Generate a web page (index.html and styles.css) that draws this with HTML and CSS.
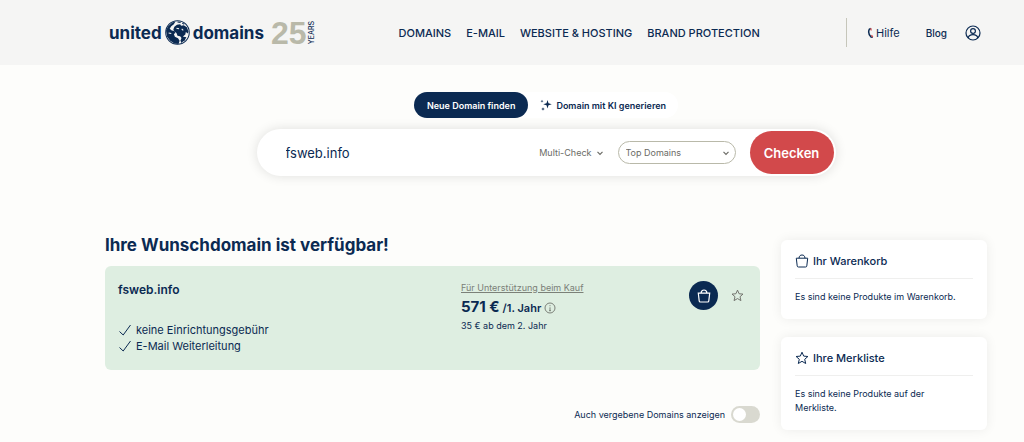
FILE: index.html
```html
<!DOCTYPE html>
<html lang="de">
<head>
<meta charset="utf-8">
<meta name="viewport" content="width=device-width, initial-scale=1">
<title>united domains</title>
<link rel="stylesheet" href="styles.css">
</head>
<body>
<svg class="sprite" aria-hidden="true">
  <symbol id="bag" viewBox="0 0 14 14"><path d="M1.300 4.200h11.400l-.9 7.700a1.200 1.200 0 0 1-1.200 1.100H3.400a1.200 1.200 0 0 1-1.200-1.100zM4 4.200C4.200 1.900 5.300 1 7 1s2.800.9 3 3.200"/></symbol>
  <symbol id="star" viewBox="0 0 14 14"><path d="M7 1.200l1.700 3.900 4.200.4-3.200 2.800 1 4.200L7 10.300l-3.700 2.200 1-4.200L1.100 5.500l4.200-.4z"/></symbol>
  <symbol id="chevron" viewBox="0 0 8 8"><path d="M1.500 2.800L4 5.300l2.500-2.500"/></symbol>
  <symbol id="check" viewBox="0 0 14 12"><path d="M1.500 7.500l3.700 3.500L12.500 1"/></symbol>
</svg>
<header class="header">
  <a class="logo" href="#" aria-label="united domains 25 years">
    <span>united</span>
    <svg class="globe" viewBox="0 0 24 24" aria-hidden="true">
      <circle class="globe-sea" cx="12" cy="12" r="11.300"/>
      <path class="globe-land" d="M1 10L3 6l4-3.500 3-1L8.500 4 6 6 4.500 8.500 6.500 10l2.500.5 1 2-1.500 1 1 2.500 3 1.500 1.500 2.500-1 3-4-.5-4-2.500-3-4z"/>
      <path class="globe-land" d="M9 6.500l2.500-2 3-.5 1 1.500 2.500-.5 3 2 1.500 4-.5 2-2-1.500-.5 2.500-2 1.500.5 2-1.500.5-2-2.500-2.500-.5-1-2.500-2-1.500-1-2z"/>
      <path class="globe-land" d="M16 17l2-1 2.500.5-1.500 3-3.500 2.500-.5-2.500z"/>
      <path class="globe-line" d="M12 2l3 .5M16.500 3l2 1"/>
      <path class="globe-gap" d="M11 8l2.500.5M16 8.500l1.500 1.500M3.500 12.500L6 13"/>
    </svg>
    <span>domains</span>
    <span class="jubilee">25</span>
    <span class="years">YEARS</span>
  </a>
  <nav class="nav">
    <a href="#">DOMAINS</a>
    <a href="#">E-MAIL</a>
    <a href="#">WEBSITE &amp; HOSTING</a>
    <a href="#">BRAND PROTECTION</a>
  </nav>
  <div class="service">
    <a class="help" href="#"><svg viewBox="0 0 6 12" aria-hidden="true"><path class="phone" d="M3.300 1.500L1.800 2.200C.8 4.500 1.500 8 3.500 10l1.800.2"/><path class="phone-end" d="M3.300 1.200l.4 2.300M4 8.200l1.300 2"/></svg>Hilfe</a>
    <a class="blog" href="#">Blog</a>
    <a class="account" href="#" aria-label="Konto"><svg viewBox="0 0 16 16" aria-hidden="true"><circle cx="8" cy="8" r="7"/><circle cx="8" cy="6" r="2.400"/><path d="M3.200 13c.5-2.300 2.300-3.300 4.800-3.300s4.300 1 4.800 3.300"/></svg></a>
  </div>
</header>
<main class="page">
  <section class="finder">
    <div class="tabs">
      <button class="tab tab-active" type="button">Neue Domain finden</button>
      <button class="tab" type="button"><svg viewBox="0 0 12 12" aria-hidden="true"><path d="M7.500 1l1 3.300L11.800 5.300l-3.300 1-1 3.300-1-3.300-3.300-1 3.300-1zM2 .7l.4 1.100 1.100.4-1.100.4L2 3.700l-.4-1.100L.5 2.200l1.100-.4zM3 8.200l.5 1.300 1.300.5-1.300.5L3 11.800l-.5-1.300-1.300-.5 1.300-.5z"/></svg>Domain mit KI generieren</button>
    </div>
    <form class="search">
      <input class="query" type="text" value="fsweb.info" aria-label="Domain">
      <button class="multi" type="button">Multi-Check <svg viewBox="0 0 8 8" aria-hidden="true"><use href="#chevron"/></svg></button>
      <div class="picker">
        <select aria-label="Kategorie"><option>Top Domains</option></select>
        <svg viewBox="0 0 8 8" aria-hidden="true"><use href="#chevron"/></svg>
      </div>
      <button class="submit" type="button">Checken</button>
    </form>
  </section>
  <div class="columns">
    <section class="results">
      <h1>Ihre Wunschdomain ist verfügbar!</h1>
      <article class="result">
        <div class="info">
          <h2>fsweb.info</h2>
          <ul>
            <li><svg viewBox="0 0 14 12" aria-hidden="true"><use href="#check"/></svg>keine Einrichtungsgebühr</li>
            <li><svg viewBox="0 0 14 12" aria-hidden="true"><use href="#check"/></svg>E-Mail Weiterleitung</li>
          </ul>
        </div>
        <div class="price">
          <a href="#">Für Unterstützung beim Kauf</a>
          <p class="amount"><strong>571 €</strong><b>/1. Jahr</b><svg viewBox="0 0 12 12" aria-hidden="true"><circle cx="6" cy="6" r="5"/><path d="M6 5.300v3.400M6 3.200v1M5 8.700h2"/></svg></p>
          <p class="later">35 € ab dem 2. Jahr</p>
        </div>
        <div class="actions">
          <button class="add" type="button" aria-label="In den Warenkorb"><svg viewBox="0 0 14 14" aria-hidden="true"><use href="#bag"/></svg></button>
          <button class="save" type="button" aria-label="Merken"><svg viewBox="0 0 14 14" aria-hidden="true"><use href="#star"/></svg></button>
        </div>
      </article>
      <label class="toggle">Auch vergebene Domains anzeigen <input type="checkbox"></label>
    </section>
    <aside class="sidebar">
      <section class="box">
        <h3><svg viewBox="0 0 14 14" aria-hidden="true"><use href="#bag"/></svg>Ihr Warenkorb</h3>
        <p>Es sind keine Produkte im Warenkorb.</p>
      </section>
      <section class="box">
        <h3><svg viewBox="0 0 14 14" aria-hidden="true"><use href="#star"/></svg>Ihre Merkliste</h3>
        <p>Es sind keine Produkte auf der Merkliste.</p>
      </section>
    </aside>
  </div>
</main>
</body>
</html>
```
FILE: styles.css
```css
* { box-sizing: border-box; }
body {
  margin: 0;
  background: #fdfdfb;
  color: #0b2a52;
  font-family: Inter, "Liberation Sans", sans-serif;
  font-size: 9px;
}
h1, h2, h3, p, ul { margin: 0; padding: 0; }
a { color: inherit; text-decoration: none; }
button, input, select { font: inherit; color: inherit; border: 0; background: none; padding: 0; margin: 0; }
button { cursor: pointer; }
svg { fill: none; stroke: currentColor; flex: none; }
.sprite { display: none; }

.header {
  display: flex;
  align-items: center;
  height: 65px;
  padding: 0 43px 0 109px;
  background: #f5f5f4;
}
.logo { display: flex; align-items: center; font-size: 17px; font-weight: 700; line-height: 24px; }
.globe { width: 25px; height: 25px; margin: 0 3px; }
.globe-sea { fill: #f5f5f4; stroke: #0b2a52; stroke-width: 1; }
.globe-land { fill: #0b2a52; stroke: none; }
.globe-line { stroke: #0b2a52; stroke-width: 1; }
.globe-gap { stroke: #f5f5f4; stroke-width: 1; }
.jubilee { margin-left: 7px; color: #b9b9a9; font-family: "Liberation Sans", Arial, sans-serif; font-size: 32px; }
.years { writing-mode: vertical-rl; transform: rotate(180deg); font-size: 7px; font-weight: 500; line-height: 10px; }
.nav { display: flex; gap: 15px; margin-left: 82px; font-size: 11px; font-weight: 500; white-space: nowrap; }
.service {
  display: flex;
  align-items: center;
  height: 29px;
  margin-left: auto;
  padding-left: 20px;
  border-left: 1px solid #c6c6ba;
}
.help { display: flex; align-items: center; gap: 2px; font-size: 11px; }
.help svg { width: 7px; height: 12px; }
.phone { stroke-width: 1.500; }
.phone-end { stroke: #d2494b; stroke-width: 1.200; }
.blog { margin-left: 26px; font-size: 10px; font-weight: 500; }
.account { display: flex; margin-left: 18px; }
.account svg { width: 16px; height: 16px; stroke-width: 1.200; }

.page { padding: 27px 37px 14px 105px; }
.finder { display: flex; flex-direction: column; align-items: center; gap: 11px; }
.tabs { display: flex; border-radius: 13px; background: #fff; }
.tab { display: flex; align-items: center; gap: 4px; height: 26px; padding: 0 12px; border-radius: 13px; font-size: 9px; font-weight: 600; }
.tab svg { width: 12px; height: 12px; fill: currentColor; stroke: none; }
.tab-active { padding: 0 13px; background: #0b2a52; color: #fff; }
.search {
  display: flex;
  align-items: center;
  width: 100%;
  max-width: 579px;
  padding: 2px 2px 2px 29px;
  border-radius: 24px;
  background: #fff;
  box-shadow: 0 0 12px rgba(0, 0, 0, 0.12);
}
.query { flex: 1; min-width: 0; height: 43px; font-size: 13px; outline: 0; }
.multi { display: flex; align-items: center; gap: 4px; margin-right: 14px; color: #6b6b66; }
.multi svg, .picker svg { width: 8px; height: 8px; stroke-width: 1.200; }
.picker { display: grid; align-items: center; width: 118px; margin-right: 14px; color: #6b6b66; }
.picker > * { grid-area: 1 / 1; }
.picker select { appearance: none; height: 23px; padding: 0 20px 0 7px; border: 1px solid #b9b9a9; border-radius: 12px; }
.picker svg { justify-self: end; margin-right: 6px; pointer-events: none; }
.submit { width: 84px; height: 43px; border-radius: 22px; background: #d2494b; color: #fff; font-size: 13px; font-weight: 600; }

.columns { display: grid; grid-template-columns: 1fr 206px; gap: 21px; margin-top: 57px; }
h1 { font-size: 17px; font-weight: 700; line-height: 24px; }
.result {
  display: flex;
  min-height: 104px;
  margin-top: 9px;
  padding: 15px 16px 15px 13px;
  border-radius: 6px;
  background: #deeee1;
}
.info { flex: 1; }
h2 { font-size: 12px; font-weight: 600; line-height: 18px; }
ul { margin-top: 23px; list-style: none; font-size: 11px; line-height: 16px; }
li { display: flex; align-items: center; gap: 4px; }
li svg { width: 14px; height: 12px; }
.price { width: 228px; line-height: 14px; }
.price a { color: #7b8078; text-decoration: underline; }
.amount { display: flex; align-items: baseline; gap: 3px; line-height: 24px; }
.amount strong { font-size: 15px; font-weight: 700; }
.amount b { font-size: 11px; font-weight: 600; }
.amount svg { align-self: center; width: 12px; height: 12px; color: #7b8078; }
.later { line-height: 12px; }
.actions { display: flex; align-items: center; align-self: flex-start; gap: 13px; }
.actions button { display: grid; place-items: center; }
.add { width: 29px; height: 29px; border-radius: 50%; background: #0b2a52; color: #fff; }
.add svg { width: 14px; height: 14px; stroke-width: 1.200; }
.save { color: #6b6b66; }
.save svg { width: 13px; height: 13px; }
.toggle { display: flex; align-items: center; justify-content: flex-end; gap: 6px; margin-top: 36px; }
.toggle input { appearance: none; display: flex; width: 29px; height: 17px; padding: 2px; border-radius: 9px; background: #d9d9d0; }
.toggle input::before { content: ""; width: 13px; height: 13px; border-radius: 50%; background: #fff; }
.toggle input:checked { justify-content: flex-end; background: #0b2a52; }

.sidebar { display: flex; flex-direction: column; gap: 18px; margin-top: 7px; }
.box { padding: 9px 14px 15px; border-radius: 6px; background: #fff; box-shadow: 0 0 12px rgba(0, 0, 0, 0.07); }
h3 { display: flex; align-items: center; gap: 4px; padding-bottom: 5px; border-bottom: 1px solid #efefee; font-size: 11px; font-weight: 500; line-height: 24px; }
h3 svg { width: 14px; height: 14px; }
.box p { margin-top: 11px; padding-right: 10px; line-height: 14px; }
```
